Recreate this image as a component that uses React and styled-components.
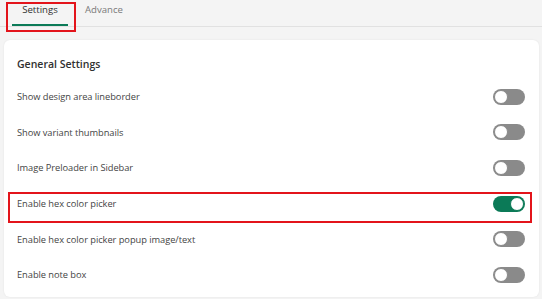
import React, { useState } from "react";
import styled, { createGlobalStyle } from "styled-components";

const GlobalStyle = createGlobalStyle`
  html, body {
    margin: 0;
    padding: 0;
    background: #f4f4f4;
    font-family: "Open Sans", "Noto Sans", Arial, sans-serif;
    color: #303030;
  }
`;

const Page = styled.div`
  width: 542px;
  height: 299px;
  overflow: hidden;
`;

const TabBar = styled.div`
  display: flex;
  height: 26px;
  padding-left: 12px;
  border-bottom: 1px solid #e1e1e1;
`;

const Tab = styled.div`
  position: relative;
  width: 56px;
  display: flex;
  justify-content: center;
  padding-top: 3px;
  box-sizing: border-box;
  font-size: 9.6px;
  color: ${props => (props.active ? "#303030" : "#7a7a7a")};
  border-bottom: 2px solid ${props => (props.active ? "#0b7a57" : "transparent")};
  margin-right: 8px;
  ${props => props.marked && `
    &::after {
      content: "";
      position: absolute;
      top: 2px;
      left: -6px;
      right: -8px;
      bottom: -8px;
      border: 2px solid #e3141b;
    }
  `}
`;

const Card = styled.div`
  margin: 13px 3px 0 4px;
  background: #fff;
  border-radius: 6px;
  box-shadow: 0 0 2px rgba(0, 0, 0, 0.08);
  padding: 14px 14px 4px 13px;
`;

const Title = styled.div`
  font-size: 10.5px;
  font-weight: 600;
  color: #303030;
  line-height: 20px;
  margin-bottom: 5px;
`;

const Row = styled.div`
  position: relative;
  height: 35.6px;
  display: flex;
  align-items: center;
  justify-content: space-between;
  font-size: 9.3px;
  letter-spacing: -0.05px;
  color: #444;
  ${props => props.marked && `
    &::after {
      content: "";
      position: absolute;
      top: 6px;
      bottom: -2px;
      left: -9px;
      right: -7px;
      border: 2px solid #e3141b;
    }
  `}
`;

const Track = styled.button`
  position: relative;
  width: 32px;
  height: 16px;
  padding: 0;
  border: none;
  border-radius: 8px;
  background: ${props => (props.on ? "#0b7a57" : "#8a8a8a")};
  cursor: pointer;
`;

const Knob = styled.span`
  position: absolute;
  top: 1px;
  left: ${props => (props.on ? "17px" : "1px")};
  width: 12px;
  height: 12px;
  border-radius: 50%;
  background: #fff;
  border: 1px solid ${props => (props.on ? "#0b7a57" : "#8a8a8a")};
`;

function Toggle({ on, onChange }) {
  return (
    <Track on={on ? 1 : 0} onClick={onChange}>
      <Knob on={on ? 1 : 0} />
    </Track>
  );
}

const initial = [
  { label: "Show design area lineborder", on: false },
  { label: "Show variant thumbnails", on: false },
  { label: "Image Preloader in Sidebar", on: false },
  { label: "Enable hex color picker", on: true, marked: true },
  { label: "Enable hex color picker popup image/text", on: false },
  { label: "Enable note box", on: false },
];

export default function App() {
  const [items, setItems] = useState(initial);
  const flip = i => setItems(items.map((it, j) => (j === i ? { ...it, on: !it.on } : it)));

  return (
    <Page>
      <GlobalStyle />
      <TabBar>
        <Tab active marked>Settings</Tab>
        <Tab>Advance</Tab>
      </TabBar>
      <Card>
        <Title>General Settings</Title>
        {items.map((it, i) => (
          <Row key={it.label} marked={it.marked ? 1 : 0}>
            <span>{it.label}</span>
            <Toggle on={it.on} onChange={() => flip(i)} />
          </Row>
        ))}
      </Card>
    </Page>
  );
}
